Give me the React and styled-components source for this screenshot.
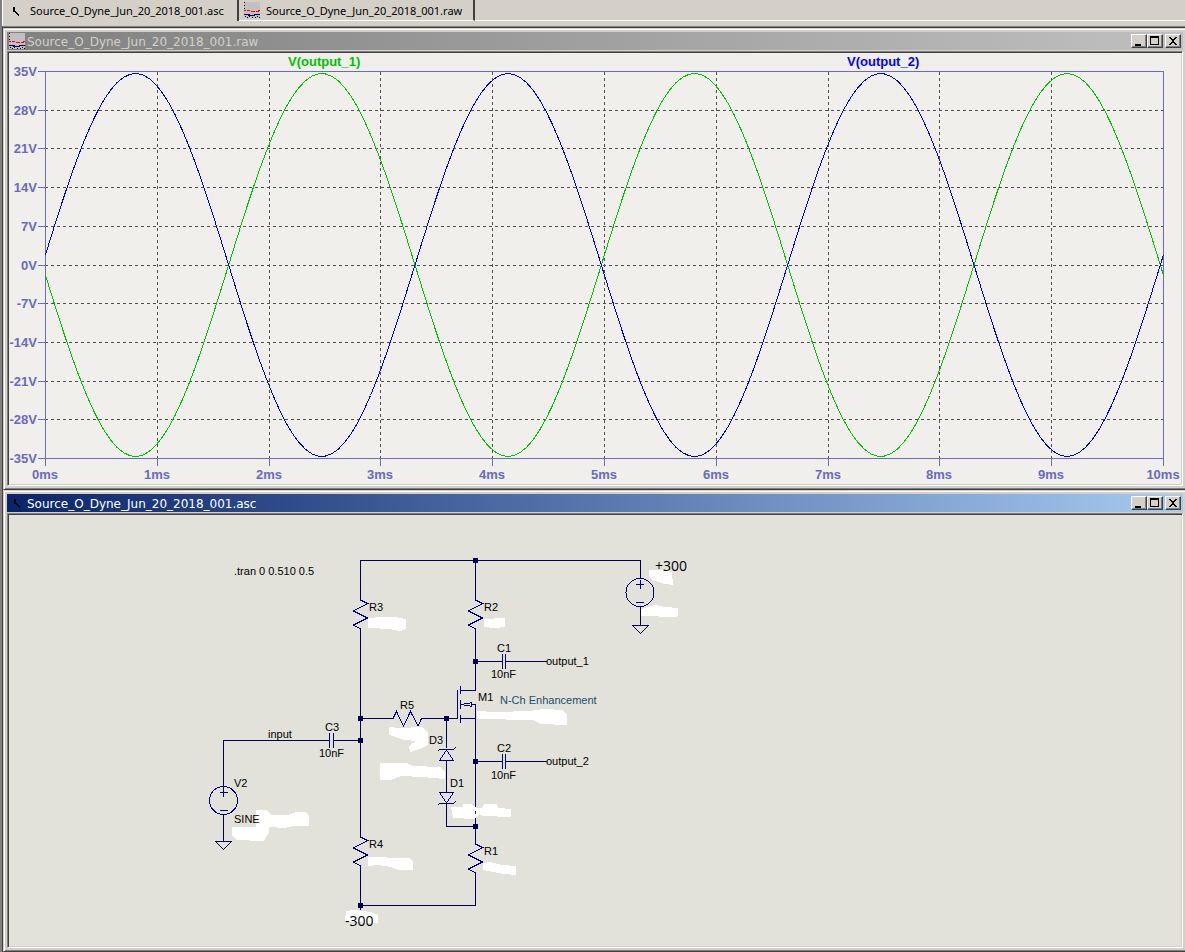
import styled, { createGlobalStyle } from 'styled-components';

const GlobalStyle = createGlobalStyle`
  * {
    box-sizing: border-box;
  }

  body {
    margin: 0;
    background-color: #d4d0c8;
  }
`;

const Shell = styled.div`
  display: flex;
  flex-direction: column;
  min-height: 100vh;
  overflow: hidden;
  border-left: 2px solid #808080;
  background-color: #d4d0c8;
`;

const TabBar = styled.div`
  display: flex;
  height: 26px;
  border-left: 1px solid #fff;
`;

const Tab = styled.button`
  display: flex;
  align-items: center;
  gap: 6px;
  height: 21px;
  min-width: 236px;
  padding: 0 5px;
  border: 0;
  border-right: 2px solid #404040;
  border-bottom: ${(props) => (props.$active ? '0' : '1px solid #fff')};
  background-color: #d4d0c8;
  color: #000;
  font: 11px 'Noto Sans', sans-serif;
  white-space: nowrap;
`;

const TabRest = styled.div`
  flex: 1;
  height: 21px;
  border-bottom: 1px solid #fff;
`;

const Workspace = styled.main`
  flex: 1;
  display: flex;
  flex-direction: column;
  border-left: 1px solid #404040;
  border-top: 1px solid #808080;
  box-shadow: inset 0 1px #404040;
  padding-top: 1px;
`;

const Window = styled.section`
  border: 1px solid #d4d0c8;
  border-bottom-color: #404040;
  border-right: 0;
  box-shadow: inset 1px 1px #fff, inset 0 -1px #808080;
  padding: 3px 2px 3px 3px;
`;

const TitleBar = styled.header`
  display: flex;
  align-items: center;
  height: 18px;
  margin-bottom: 1px;
  padding: 0 2px;
  gap: 2px;
  color: ${(props) => (props.$active ? '#fff' : '#d4d0c8')};
  background: ${(props) =>
    props.$active
      ? 'linear-gradient(90deg, #0a246a, #a6caf0)'
      : 'linear-gradient(90deg, #808080, #c0c0c0)'};
`;

const Title = styled.h2`
  flex: 1;
  margin: 0;
  padding-top: 2px;
  font: 12px 'DejaVu Sans', sans-serif;
  white-space: nowrap;
`;

const Controls = styled.div`
  display: flex;

  & > button:last-child {
    margin-left: 2px;
  }
`;

const ControlButton = styled.button`
  display: flex;
  width: 16px;
  height: 14px;
  padding: 0;
  border: 1px solid;
  border-color: #fff #404040 #404040 #fff;
  box-shadow: inset -1px -1px #808080;
  background-color: #d4d0c8;
`;

const Client = styled.div`
  border: 1px solid;
  border-color: #808080 #fff #fff #808080;
  box-shadow: inset 1px 1px #404040, inset -1px -1px #d4d0c8;
  padding: 1px;
`;

const Drawing = styled.svg`
  display: block;
  width: 100%;
  height: auto;
  background-color: ${(props) => props.$bg};
`;

const AxisText = styled.text`
  font: bold 13px 'Liberation Sans', Arial, sans-serif;
  fill: ${(props) => props.$color || '#6a6abe'};
`;

const PartText = styled.text`
  font: 11px 'Liberation Sans', Arial, sans-serif;
  fill: ${(props) => props.$color || '#000'};
`;

const SupplyText = styled.text`
  font: 14px 'Open Sans', sans-serif;
  fill: #000;
`;

function SchematicIcon() {
  return (
    <svg width="16" height="16" viewBox="0 0 16 16" shapeRendering="crispEdges" aria-hidden="true">
      <path d="M5 4h2v5h-2zM7 8h1v2h-1zM8 9h1v2h-1zM9 10h1v2h-1zM10 11h1v2h-1z" fill="#000" />
    </svg>
  );
}

function WaveIcon() {
  return (
    <svg width="16" height="16" viewBox="0 0 16 16" shapeRendering="crispEdges" aria-hidden="true">
      <path d="M0 0h16v16h-16z" fill="#c0c0c0" />
      <path d="M0 8h2v1h-2zM3 8h3v1h-3zM7 9h4v1h-4zM12 9h3v1h-3zM14 8h2v1h-2z" fill="#f00" />
      <path d="M0 12h6v1h-6zM4 13h7v1h-7zM10 12h6v1h-6z" fill="#000080" />
      <path
        d="M0 0h1v1h-1zM0 3h1v1h-1zM0 6h1v1h-1zM1 14h1v1h-1zM3 15h1v1h-1zM5 14h1v1h-1zM8 15h1v1h-1zM11 15h1v1h-1zM13 14h1v1h-1zM15 15h1v1h-1z"
        fill="#000"
      />
    </svg>
  );
}

function WindowControls() {
  return (
    <Controls>
      <ControlButton aria-label="Minimize">
        <svg width="14" height="12" shapeRendering="crispEdges">
          <path d="M3 9h6v2h-6z" />
        </svg>
      </ControlButton>
      <ControlButton aria-label="Maximize">
        <svg width="14" height="12" shapeRendering="crispEdges">
          <path d="M2 1h9v9h-9zM3 3v6h7v-6z" fillRule="evenodd" />
        </svg>
      </ControlButton>
      <ControlButton aria-label="Close">
        <svg width="14" height="12" shapeRendering="crispEdges">
          <path d="M3 2h2v1h1v1h2v-1h1v-1h2v1h-1v1h-1v1h-1v2h1v1h1v1h1v1h-2v-1h-1v-1h-2v1h-1v1h-2v-1h1v-1h1v-1h1v-2h-1v-1h-1v-1h-1z" />
        </svg>
      </ControlButton>
    </Controls>
  );
}

const PLOT = { left: 45, right: 1163, top: 71, bottom: 458 };
const ticks = Array.from({ length: 11 }, (_, i) => i);
const tickX = (i) => Math.round(PLOT.left + i * 111.8) + 0.5;
const tickY = (i) => Math.round(PLOT.top + i * 38.7) + 0.5;

function wave(sign) {
  const points = [];
  for (let x = PLOT.left; x <= PLOT.right; x += 6.5) {
    const y = 265 - sign * 191.5 * Math.sin((2 * Math.PI * (x - 41.8)) / 372.67);
    points.push(`${x + 0.5},${y.toFixed(1)}`);
  }
  return points.join(' ');
}

function Plot() {
  return (
    <Drawing viewBox="9 53 1172 431" $bg="#f0efeb" role="img" aria-label="Output waveforms">
      <g shapeRendering="crispEdges" fill="none">
        <g stroke="#505050" strokeDasharray="3 3">
          {ticks.slice(1, 10).map((i) => (
            <path key={i} d={`M${tickX(i)} 72V458M45 ${tickY(i)}H1163`} />
          ))}
        </g>
        <path d="M45.5 71.5H1163.5V458.5H45.5z" stroke="#6a6abe" />
        <g stroke="#6a6abe">
          {ticks.map((i) => (
            <path key={i} d={`M${tickX(i)} 458V466M38 ${tickY(i)}H45`} />
          ))}
        </g>
        <polyline points={wave(-1)} stroke="#00c000" />
        <polyline points={wave(1)} stroke="#0000e6" />
      </g>
      {ticks.map((i) => (
        <AxisText key={i} x="37" y={tickY(i) + 4.5} textAnchor="end">
          {`${35 - i * 7}V`}
        </AxisText>
      ))}
      {ticks.map((i) => (
        <AxisText key={i} x={tickX(i) - 0.5} y="479" textAnchor="middle">
          {`${i}ms`}
        </AxisText>
      ))}
      <AxisText x="288" y="66" $color="#00c000">V(output_1)</AxisText>
      <AxisText x="847" y="66" $color="#0000ff">V(output_2)</AxisText>
    </Drawing>
  );
}

const wires = [
  'M360.5 600V560.5H640.5V578',
  'M360.5 629V837M360.5 866V910M360 905.5H475.5V873',
  'M475.5 560V600M475.5 629V690.5M475.5 704V844',
  'M475 661.5H502M506 661.5H547M475 761.5H502M506 761.5H547',
  'M360 718.5H393M421 718.5H457M446.5 718V748M446.5 761V792M446.5 804V826.5H475',
  'M223.5 787V740.5H329M334 740.5H360M223.5 814V841M640.5 606V625',
  'M215.5 841.5H231.5L223.5 849.5zM632.5 625.5H648.5L640.5 633.5z'
];

const zigzag = 'l7 3.5l-14 7.5l14 7l-14 7l7 4';

const symbols = [
  `M360.5 600${zigzag}M475.5 600${zigzag}M360.5 837${zigzag}M475.5 844${zigzag}`,
  'M393 718.5L396.5 711.5L403.5 726L410.5 711.5L418 726L421.5 718.5',
  'M502.5 654V669M505.5 654V669M502.5 754V769M505.5 754V769M329.5 733V748M333.5 733V748',
  'M457.5 690V719M460.5 686V694M460.5 700V709M460.5 715V723M460 690.5H475M460 718.5H475',
  'M461 704.5H463L465 703.5H469L471.5 702.5V706.5L469 705.5H465L463 704.5M472 704.5H475',
  'M437.5 751.5L439.5 749.5H453.5L455.5 747.5M446.5 750L439.5 760.5H453.5z',
  'M439.5 792.5H453.5L446.5 803zM437.5 805.5L439.5 803.5H453.5L455.5 801.5',
  'M220 792.5H228M223.5 787V797M220 810.5H228M636 584.5H644M640.5 580V589M636 602.5H644'
];

const junctions = [
  [475, 560],
  [475, 661],
  [360, 718],
  [446, 718],
  [360, 740],
  [475, 761],
  [475, 826],
  [360, 905]
];

const blanks = [
  '368,618 382,617 395,617 406,619 406,629 401,631 393,630 391,629 368,628',
  '484,619 505,618 505,627 494,628 484,627',
  '649,570 660,570 672,572 673,585 665,584 652,580 649,577',
  '641,609 655,605 665,607 678,608 678,616 676,617 641,616',
  '477,711 494,712 532,711 534,710 545,709 562,710 567,715 567,725 541,724 533,720 477,719',
  '389,727 400,728 422,727 428,733 428,745 422,748 410,752 409,746 416,741 405,740 389,735',
  '380,763 407,763 413,766 440,767 445,771 445,779 422,777 401,776 391,780 380,780',
  '451,807 463,807 463,804 471,804 477,808 482,808 484,804 497,804 498,808 511,809 511,817 483,816 479,814 474,819 453,818',
  '368,857 383,857 390,858 409,858 413,862 413,870 398,870 391,867 378,865 368,866',
  '483,863 490,862 502,865 516,866 516,875 503,874 483,870',
  '346,911 354,910 371,912 378,915 378,923 345,922',
  '256,810 266,810 272,815 288,815 296,812 306,812 309,816 309,826 293,826 285,828 269,827 269,832 264,841 236,840 232,835 232,827 256,827'
];

const partLabels = [
  [234, 575, '.tran 0 0.510 0.5'],
  [369, 611, 'R3'],
  [484, 611, 'R2'],
  [497, 652, 'C1'],
  [491, 678, '10nF'],
  [546, 665, 'output_1'],
  [478, 701, 'M1'],
  [400, 709, 'R5'],
  [429, 744, 'D3'],
  [450, 787, 'D1'],
  [497, 752, 'C2'],
  [491, 779, '10nF'],
  [546, 765, 'output_2'],
  [369, 848, 'R4'],
  [484, 855, 'R1'],
  [325, 731, 'C3'],
  [319, 757, '10nF'],
  [268, 738, 'input'],
  [234, 787, 'V2'],
  [234, 823, 'SINE']
];

function Schematic() {
  return (
    <Drawing viewBox="9 515 1172 431" $bg="#e2e2da" role="img" aria-label="Amplifier schematic">
      <g fill="none" shapeRendering="crispEdges">
        <path d={symbols.join('')} stroke="#000080" />
        <circle cx="223.5" cy="800.5" r="14" stroke="#000080" />
        <circle cx="640" cy="592.5" r="14" stroke="#000080" />
        <path d={wires.join('')} stroke="#000058" />
      </g>
      {junctions.map(([x, y]) => (
        <rect key={`${x}-${y}`} x={x - 2} y={y - 2} width="5" height="5" fill="#000050" />
      ))}
      <g fill="#fff" shapeRendering="crispEdges">
        {blanks.map((points) => (
          <polygon key={points} points={points} />
        ))}
      </g>
      <rect x="475" y="811" width="1" height="3" fill="#302018" />
      {partLabels.map(([x, y, label]) => (
        <PartText key={`${x}-${y}`} x={x} y={y}>
          {label}
        </PartText>
      ))}
      <PartText x="500" y="704" $color="#14506e">N-Ch Enhancement</PartText>
      <SupplyText x="655" y="571">+300</SupplyText>
      <SupplyText x="345" y="926">-300</SupplyText>
    </Drawing>
  );
}

function App() {
  return (
    <>
      <GlobalStyle />
      <Shell>
        <TabBar>
          <Tab $active>
            <SchematicIcon />
            Source_O_Dyne_Jun_20_2018_001.asc
          </Tab>
          <Tab>
            <WaveIcon />
            Source_O_Dyne_Jun_20_2018_001.raw
          </Tab>
          <TabRest />
        </TabBar>
        <Workspace>
          <Window>
            <TitleBar>
              <WaveIcon />
              <Title>Source_O_Dyne_Jun_20_2018_001.raw</Title>
              <WindowControls />
            </TitleBar>
            <Client>
              <Plot />
            </Client>
          </Window>
          <Window>
            <TitleBar $active>
              <SchematicIcon />
              <Title>Source_O_Dyne_Jun_20_2018_001.asc</Title>
              <WindowControls />
            </TitleBar>
            <Client>
              <Schematic />
            </Client>
          </Window>
        </Workspace>
      </Shell>
    </>
  );
}

export default App;
